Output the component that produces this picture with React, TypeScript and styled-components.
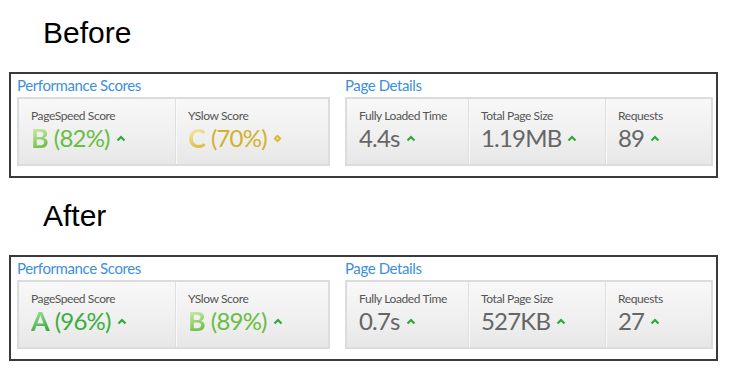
import React from 'react';
import styled, { createGlobalStyle } from 'styled-components';

const GlobalStyle = createGlobalStyle`
  body {
    margin: 0;
    background: #fff;
    font-family: Lato, "Open Sans", Arial, sans-serif;
  }
`;

const Page = styled.div`
  width: 732px;
  height: 387px;
  padding-top: 16px;
  box-sizing: border-box;
  display: flex;
  flex-direction: column;
  gap: 21px;
`;

const Section = styled.section`
  display: flex;
  flex-direction: column;
`;

const Title = styled.h1`
  margin: 0 0 22px 43px;
  font-family: "Liberation Sans", Arial, sans-serif;
  font-weight: 400;
  font-size: 30px;
  line-height: 34px;
  color: #000;
`;

const Frame = styled.div`
  margin-left: 9px;
  width: 709px;
  box-sizing: border-box;
  border: 2px solid #3a3a3a;
  padding: 1px 3px 10px 6px;
  display: flex;
  gap: 15px;
`;

const Group = styled.div<{ $width?: number }>`
  display: flex;
  flex-direction: column;
  ${(p) => (p.$width ? `width: ${p.$width}px;` : 'flex: 1;')}
`;

const GroupTitle = styled.h2`
  margin: 0 0 2px;
  font-size: 15px;
  line-height: 20px;
  font-weight: 400;
  color: #3d8fdc;
  letter-spacing: -0.4px;
`;

const Panel = styled.div<{ $cols: string }>`
  height: 69px;
  box-sizing: border-box;
  border: 2px solid #dcdcdc;
  background: linear-gradient(to bottom, #f8f8f8 0%, #efefef 60%, #e7e7e7 100%);
  display: grid;
  grid-template-columns: ${(p) => p.$cols};
`;

const Cell = styled.div`
  padding: 10px 0 0 12px;
  border-left: 1px solid #dfdfdf;
  box-shadow: inset 1px 0 0 #fafafa;

  &:first-child {
    border-left: none;
    box-shadow: none;
  }
`;

const Label = styled.div`
  font-size: 12px;
  line-height: 14px;
  color: #555;
  letter-spacing: -0.4px;
`;

const ValueRow = styled.div`
  display: flex;
  align-items: center;
  height: 29px;
`;

const Value = styled.span<{ $color: string }>`
  font-size: 24px;
  line-height: 28px;
  color: ${(p) => p.$color};
  letter-spacing: -0.8px;
`;

const Grade = styled.span<{ $from: string; $to: string }>`
  font-size: 27px;
  line-height: 28px;
  font-weight: 700;
  margin-right: 5px;
  background: linear-gradient(160deg, ${(p) => p.$from} 10%, ${(p) => p.$to} 90%);
  -webkit-background-clip: text;
  background-clip: text;
  color: transparent;
`;

const Marker = styled.svg`
  margin-left: 6px;
  margin-top: 2px;
  flex: none;
`;

const Up = () => (
  <Marker width="10" height="7" viewBox="0 0 10 7">
    <polyline points="1.5,5.5 5,2 8.5,5.5" fill="none" stroke="#2fa83a" strokeWidth="2.2" />
  </Marker>
);

const Same = () => (
  <Marker width="9" height="9" viewBox="0 0 9 9">
    <polygon points="4.5,0.5 8.5,4.5 4.5,8.5 0.5,4.5" fill="#d8b82a" />
    <polygon points="4.5,3 6,4.5 4.5,6 3,4.5" fill="#f3e6a0" />
  </Marker>
);

type Tone = 'green' | 'lime' | 'yellow';

const tones: Record<Tone, { text: string; from: string; to: string }> = {
  green: { text: '#3aae3f', from: '#a6e49a', to: '#2ea43a' },
  lime: { text: '#69bd43', from: '#d2eeaa', to: '#62b83c' },
  yellow: { text: '#d1b22a', from: '#f7eeb4', to: '#d6b72e' },
};

interface Score {
  label: string;
  grade: string;
  pct: string;
  tone: Tone;
  trend: 'up' | 'same';
}

interface Detail {
  label: string;
  value: string;
}

interface Run {
  title: string;
  scores: Score[];
  details: Detail[];
}

const runs: Run[] = [
  {
    title: 'Before',
    scores: [
      { label: 'PageSpeed Score', grade: 'B', pct: '(82%)', tone: 'lime', trend: 'up' },
      { label: 'YSlow Score', grade: 'C', pct: '(70%)', tone: 'yellow', trend: 'same' },
    ],
    details: [
      { label: 'Fully Loaded Time', value: '4.4s' },
      { label: 'Total Page Size', value: '1.19MB' },
      { label: 'Requests', value: '89' },
    ],
  },
  {
    title: 'After',
    scores: [
      { label: 'PageSpeed Score', grade: 'A', pct: '(96%)', tone: 'green', trend: 'up' },
      { label: 'YSlow Score', grade: 'B', pct: '(89%)', tone: 'lime', trend: 'up' },
    ],
    details: [
      { label: 'Fully Loaded Time', value: '0.7s' },
      { label: 'Total Page Size', value: '527KB' },
      { label: 'Requests', value: '27' },
    ],
  },
];

function Report({ run }: { run: Run }) {
  return (
    <Section>
      <Title>{run.title}</Title>
      <Frame>
        <Group $width={313}>
          <GroupTitle>Performance Scores</GroupTitle>
          <Panel $cols="156px 1fr">
            {run.scores.map((s) => {
              const t = tones[s.tone];
              return (
                <Cell key={s.label}>
                  <Label>{s.label}</Label>
                  <ValueRow>
                    <Grade $from={t.from} $to={t.to}>{s.grade}</Grade>
                    <Value $color={t.text}>{s.pct}</Value>
                    {s.trend === 'up' ? <Up /> : <Same />}
                  </ValueRow>
                </Cell>
              );
            })}
          </Panel>
        </Group>
        <Group>
          <GroupTitle>Page Details</GroupTitle>
          <Panel $cols="121px 137px 1fr">
            {run.details.map((d) => (
              <Cell key={d.label}>
                <Label>{d.label}</Label>
                <ValueRow>
                  <Value $color="#666">{d.value}</Value>
                  <Up />
                </ValueRow>
              </Cell>
            ))}
          </Panel>
        </Group>
      </Frame>
    </Section>
  );
}

export default function App() {
  return (
    <>
      <GlobalStyle />
      <Page>
        {runs.map((r) => (
          <Report key={r.title} run={r} />
        ))}
      </Page>
    </>
  );
}
